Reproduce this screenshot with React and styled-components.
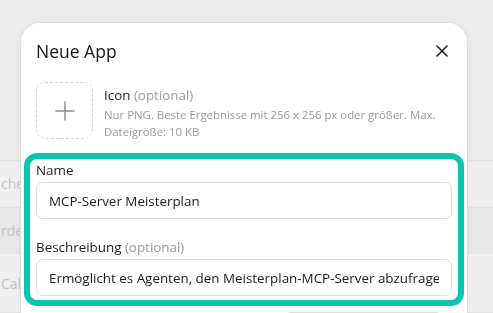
import React from "react";
import styled, { createGlobalStyle } from "styled-components";

const GlobalStyle = createGlobalStyle`
  html, body {
    margin: 0;
    height: 100%;
  }
  body {
    background: #ececec;
    font-family: "Open Sans", "Noto Sans", "Liberation Sans", sans-serif;
    color: #1c1c1c;
    overflow: hidden;
  }
`;

// page behind the dialog (dimmed)
const Page = styled.div`
  display: flex;
  flex-direction: column;
  height: 313px;
`;

const PageTop = styled.div`
  height: 161px;
  background: #ebebeb;
  border-bottom: 1px solid #e2e2e2;
`;

const PageRow = styled.div`
  height: ${(props) => props.h || 46}px;
  display: flex;
  align-items: center;
  background: ${(props) => (props.shade ? "#e7e7e7" : "#efefef")};
  border-bottom: 1px solid #e2e2e2;
  color: #c4c4c4;
  font-size: 14px;
  white-space: nowrap;
  padding-left: 1px;
`;

const Overlay = styled.div`
  position: fixed;
  inset: 0;
  padding: 22px 0 0 20px;
`;

const Dialog = styled.div`
  width: 448px;
  height: 100%;
  box-sizing: border-box;
  background: #fff;
  border: 1px solid #dddddd;
  border-bottom: none;
  border-radius: 20px 20px 0 0;
  padding: 14px 15px 0;
  box-shadow: 0 0 6px rgba(0, 0, 0, 0.04);
`;

const Header = styled.div`
  display: flex;
  align-items: center;
  justify-content: space-between;
  height: 28px;
`;

const Title = styled.h2`
  margin: 0;
  font-size: 17.5px;
  font-weight: 400;
  color: #161616;
`;

const CloseButton = styled.button`
  width: 24px;
  height: 24px;
  padding: 0;
  margin-right: -2px;
  border: none;
  background: none;
  display: flex;
  align-items: center;
  justify-content: center;
  color: #1a1a1a;
`;

const IconRow = styled.div`
  display: flex;
  gap: 11px;
  margin-top: 17px;
`;

const IconDrop = styled.div`
  flex: none;
  width: 55px;
  height: 55px;
  border: 1px dashed #d4d4d4;
  border-radius: 9px;
  display: flex;
  align-items: center;
  justify-content: center;
  color: #8c8c8c;
`;

const IconInfo = styled.div`
  padding-top: 3px;
`;

const Label = styled.div`
  font-size: 13.4px;
  line-height: 20px;
  color: #1e1e1e;
  margin-bottom: ${(props) => props.gap || 0}px;
`;

const Optional = styled.span`
  color: #9b9b9b;
`;

const Hint = styled.div`
  font-size: 11.4px;
  line-height: 17px;
  color: #9a9a9a;
  white-space: nowrap;
  margin-top: 1px;
`;

const Highlight = styled.section`
  margin: 13px -12px 0;
  border: 6px solid #0cc4b1;
  border-radius: 13px;
  padding: 1px 6px 4px;
  display: flex;
  flex-direction: column;
  gap: 18px;
`;

const Field = styled.div`
  display: flex;
  flex-direction: column;
`;

const Input = styled.input`
  height: 37px;
  box-sizing: border-box;
  border: 1px solid #dcdcdc;
  border-radius: 7px;
  padding: 0 12px;
  font-family: inherit;
  font-size: 13.4px;
  color: #1c1c1c;
  background: #fff;
  outline: none;
`;

const Footer = styled.div`
  display: flex;
  justify-content: flex-end;
  padding: 6px 10px 0 0;
`;

const Select = styled.div`
  width: 155px;
  height: 30px;
  border: 1px solid #dedede;
  border-radius: 6px;
`;

const PlusIcon = () => (
  <svg width="20" height="20" viewBox="0 0 20 20" fill="none" stroke="currentColor" strokeWidth="1.4" strokeLinecap="round">
    <path d="M10 1v18M1 10h18" />
  </svg>
);

const CloseIcon = () => (
  <svg width="12" height="12" viewBox="0 0 12 12" fill="none" stroke="currentColor" strokeWidth="1.5" strokeLinecap="round">
    <path d="M1 1l10 10M11 1L1 11" />
  </svg>
);

const App = () => {
  return (
    <>
      <GlobalStyle />
      <Page>
        <PageTop />
        <PageRow h={46}>che</PageRow>
        <PageRow h={46} shade>rde</PageRow>
        <PageRow h={58}>Calendar</PageRow>
      </Page>
      <Overlay>
        <Dialog>
          <Header>
            <Title>Neue App</Title>
            <CloseButton aria-label="Schließen">
              <CloseIcon />
            </CloseButton>
          </Header>

          <IconRow>
            <IconDrop>
              <PlusIcon />
            </IconDrop>
            <IconInfo>
              <Label>
                Icon <Optional>(optional)</Optional>
              </Label>
              <Hint>
                Nur PNG. Beste Ergebnisse mit 256 x 256 px oder größer. Max.
                <br />
                Dateigröße: 10 KB
              </Hint>
            </IconInfo>
          </IconRow>

          <Highlight>
            <Field>
              <Label gap={2}>Name</Label>
              <Input readOnly value="MCP-Server Meisterplan" />
            </Field>
            <Field>
              <Label gap={2}>
                Beschreibung <Optional>(optional)</Optional>
              </Label>
              <Input readOnly value="Ermöglicht es Agenten, den Meisterplan-MCP-Server abzufragen und zu nutzen." />
            </Field>
          </Highlight>

          <Footer>
            <Select />
          </Footer>
        </Dialog>
      </Overlay>
    </>
  );
};

export default App;
